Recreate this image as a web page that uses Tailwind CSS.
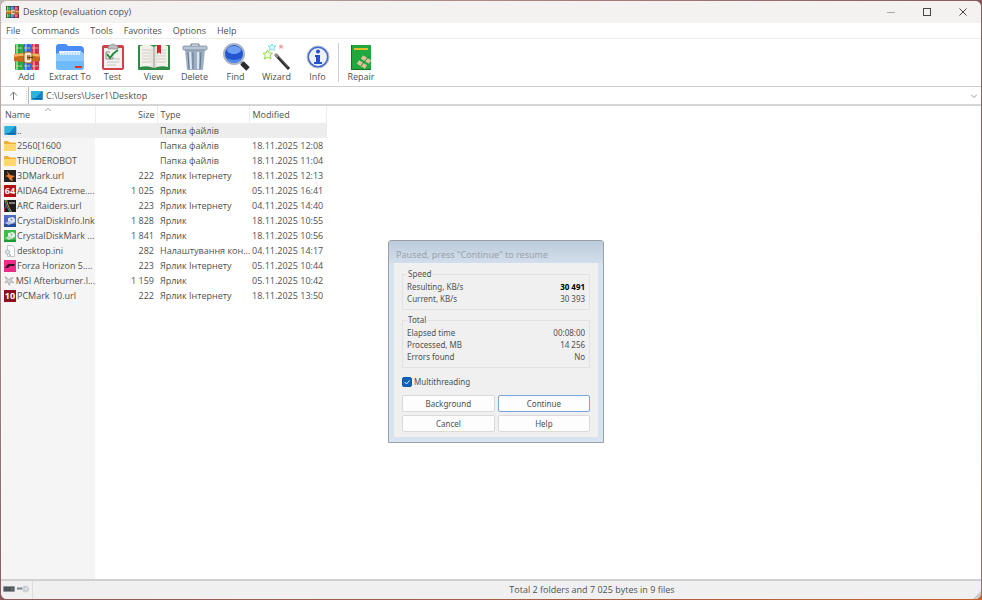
<!DOCTYPE html>
<html lang="en">
<head>
  <meta charset="UTF-8" />
  <meta name="viewport" content="width=device-width, initial-scale=1.0"/>
  <title>Desktop (evaluation copy)</title>
  <script src="https://cdn.jsdelivr.net/npm/@tailwindcss/browser@4"></script>
</head>
<body class="h-screen overflow-hidden bg-linear-to-br from-[#c4b6b3] via-[#8a5a5c] to-[#c4622c] p-px font-['Open_Sans','Noto_Sans',sans-serif] text-[9px] leading-3 text-[#505050]">

  <!-- Shared icons -->
  <svg class="hidden">
    <symbol id="books" viewBox="0 0 26 28">
      <rect x="1" y="1" width="8" height="26" rx="1" fill="#2fae3c"/><rect x="2" y="1" width="2" height="26" fill="#7be07b"/>
      <rect x="9" y="1" width="8" height="26" rx="1" fill="#2d6fe0"/><rect x="11" y="1" width="2" height="26" fill="#74b5ff"/>
      <rect x="17" y="1" width="8" height="26" rx="1" fill="#e0304c"/><rect x="19" y="1" width="2" height="26" fill="#ff7f96"/>
      <path d="M5 2v24M13 2v24M22 2v24" stroke="#000" stroke-opacity=".2"/>
      <path d="M2 5h6M10 5h6M18 5h6M2 23h6M10 23h6M18 23h6" stroke="#d9d9a0" stroke-width=".8"/>
      <path d="M0 11q13-2 26 0v7q-13 2-26 0z" fill="#c96a1c"/>
      <path d="M0 12.500q13-2 26 0" fill="none" stroke="#f6b55c" stroke-width="2.500"/>
      <rect x="10" y="9" width="8" height="11" rx="2" fill="#f0e6d2" stroke="#9a5618"/>
      <path d="M13 12h3v5h-3z" fill="#c98338"/><path d="M13 14.500h6" stroke="#70401a" stroke-width="1.500"/>
    </symbol>
    <symbol id="desktop" viewBox="0 0 13 10">
      <rect width="13" height="10" rx="1" fill="#1583c6"/><path d="M0 1q0-1 1-1h11L3 10H1q-1 0-1-1z" fill="#2bb4dc"/>
      <path d="M1 8.500h11" stroke="#0b5f9e"/>
    </symbol>
    <symbol id="folder" viewBox="0 0 12 10">
      <path d="M0 1q0-1 1-1h3l1.500 1.500H11q1 0 1 1V8H0z" fill="#eeb02c"/><path d="M0 3h12v6q0 1-1 1H1Q0 10 0 9z" fill="#ffd76c"/>
    </symbol>
  </svg>

  <div class="relative flex h-full flex-col overflow-hidden rounded-md bg-white">

    <!-- Title bar -->
    <header class="flex h-[22px] shrink-0 items-center bg-[#f4f1f1] pl-[5px]">
      <svg class="mr-1 h-3 w-[13px]" viewBox="0 0 26 28" preserveAspectRatio="none"><rect width="26" height="28" fill="#38233a"/><use href="#books"/></svg>
      <h1 class="flex-1">Desktop (evaluation copy)</h1>
      <button aria-label="Minimize" class="flex w-9 justify-center"><svg class="size-2" viewBox="0 0 8 8"><path d="M0 4.500h8" stroke="#aaa"/></svg></button>
      <button aria-label="Maximize" class="flex w-9 justify-center"><svg class="size-2" viewBox="0 0 8 8"><rect x=".5" y=".5" width="7" height="7" fill="none" stroke="#444"/></svg></button>
      <button aria-label="Close" class="flex w-9 justify-center"><svg class="size-2" viewBox="0 0 8 8"><path d="M.5.500l7 7M7.500.500l-7 7" stroke="#444"/></svg></button>
    </header>

    <!-- Menu -->
    <nav class="flex h-4 shrink-0 items-center gap-[11px] border-b border-[#ececec] pt-px pl-[5px]">
      <button>File</button>
      <button>Commands</button>
      <button>Tools</button>
      <button>Favorites</button>
      <button>Options</button>
      <button>Help</button>
    </nav>

    <!-- Toolbar -->
    <div class="flex h-12 shrink-0 border-b border-[#cfcfcf] pt-1 pl-1" role="toolbar">
      <button class="flex w-[43px] flex-col items-center">
        <svg class="h-7 w-[26px]"><use href="#books"/></svg>
        <span>Add</span>
      </button>
      <button class="flex w-11 flex-col items-center">
        <svg class="h-7 w-[30px]" viewBox="0 0 30 28">
          <path d="M1 4q0-3 3-3h6q2 0 3 2h12q4 0 4 4v12H1z" fill="#4a8cf5"/>
          <path d="M4 8h22v9H4z" fill="#eef4fb"/>
          <path d="M1 12q0-2 2-2h4q2 0 3-1h16q3 0 3 3v12q0 3-3 3H4q-3 0-3-3z" fill="#8ccbfe"/>
          <path d="M1 18h28v6q0 3-3 3H4q-3 0-3-3z" fill="#6fbafb"/>
          <path d="M5 10.500h20" stroke="#f4f7fb" stroke-width="3" stroke-dasharray="1 .6"/>
          <path d="M20 24h7" stroke="#e2322c" stroke-width="2"/>
        </svg>
        <span>Extract To</span>
      </button>
      <button class="flex w-[41px] flex-col items-center">
        <svg class="h-7 w-6" viewBox="0 0 24 28">
          <rect x="1" y="2" width="22" height="25" rx="2" fill="#cf4048"/><rect x="3" y="5" width="18" height="20" fill="#f1f1ef"/>
          <path d="M7 4q0-2 3-2 0-1 2-1t2 1q3 0 3 2v2H7z" fill="#b9bcc0" stroke="#777" stroke-width=".5"/>
          <path d="M13 16h6M6 19h12M6 22h9" stroke="#c6c6c6"/>
          <path d="M6 11l3 4q3-5 8-8" fill="none" stroke="#248a3c" stroke-width="2"/>
          <path d="M9 9H5v7h7v-2" fill="none" stroke="#777" stroke-width=".8"/>
        </svg>
        <span>Test</span>
      </button>
      <button class="flex w-[41px] flex-col items-center">
        <svg class="h-7 w-8" viewBox="0 0 32 28">
          <rect y="2" width="32" height="25" rx="1" fill="#2f8a45"/>
          <path d="M2 3q8-3 14 1 6-4 14-1v21q-8-2-14 1-6-3-14-1z" fill="#f3f1ea"/>
          <path d="M16 4v21" stroke="#8b8b80"/><path d="M14 4v20M18 4v20" stroke="#d8d5ca"/>
          <path d="M4 7h9M4 10h9M4 13h9M4 16h9M4 19h9M19 13h9M19 16h9M19 19h9M24 7h4M24 10h4" stroke="#cfcdc5"/>
          <path d="M19 2h4v9l-2-1.500-2 1.500z" fill="#d8232e"/>
        </svg>
        <span>View</span>
      </button>
      <button class="flex w-[41px] flex-col items-center">
        <svg class="h-7 w-[26px]" viewBox="0 0 26 28">
          <path d="M9 3V1h8v2" fill="none" stroke="#66768a"/>
          <path d="M3 7h20l-2 20H5z" fill="#9fb0c4"/>
          <path d="M8 9l1 17M16 9v17" stroke="#dce6f0" stroke-width="2"/><path d="M11 9v17M19 9l-1 17M6 9l1 17" stroke="#63758b"/>
          <rect x="1" y="3" width="24" height="4" rx="1" fill="#b7c5d5" stroke="#6b7c90" stroke-width=".7"/>
        </svg>
        <span>Delete</span>
      </button>
      <button class="flex w-[41px] flex-col items-center">
        <svg class="h-7 w-7" viewBox="0 0 28 28">
          <path d="M18 18l3 3" stroke="#8a8f98" stroke-width="3"/><path d="M20 20l6 6" stroke="#2b2b2f" stroke-width="5"/>
          <circle cx="12" cy="11" r="10" fill="#2456d0" stroke="#a9b4c6" stroke-width="2"/>
          <ellipse cx="12" cy="7" rx="7" ry="4" fill="#6f9ff5"/><path d="M5 15q7 4 14 0-2 5-7 5t-7-5z" fill="#4f8cf2"/>
        </svg>
        <span>Find</span>
      </button>
      <button class="flex w-[41px] flex-col items-center">
        <svg class="h-7 w-7" viewBox="0 0 28 28">
          <path d="M13 12l13 14" stroke="#29292c" stroke-width="3"/><path d="M12 11l3 3" stroke="#8d8d90" stroke-width="3"/><path d="M16 14l9 10" stroke="#85858a" stroke-width=".8"/>
          <path d="M4.500 7l1.500 3 3.500.2L7 12.500l1 3.500-3.300-1.700L1.500 16l.7-3.500L0 10.200l3.200-.2z" fill="#f6ffe8" stroke="#8bdc3c"/>
          <path d="M9 1l1 2h3l-2 2 .6 2.500L9 6 6.500 7.500 7 5 5 3h3z" fill="#e2fbff" stroke="#6cd5ec" stroke-width=".8"/>
          <path d="M18 1l.7 1.500h2L19.300 4l.5 2L18 5l-1.800 1 .5-2-1.400-1.500h2z" fill="#f0a0a0"/>
        </svg>
        <span>Wizard</span>
      </button>
      <button class="flex w-[41px] flex-col items-center">
        <svg class="h-7 w-6" viewBox="0 0 24 28">
          <circle cx="12" cy="14" r="11" fill="#edf1f8" stroke="#aeb7c6"/><circle cx="12" cy="14" r="9.700" fill="none" stroke="#3f67cf" stroke-width="1.500"/>
          <circle cx="12" cy="8.500" r="2" fill="#2852cc"/><path d="M9 12h5v7h2v2H8v-2h2v-5H9z" fill="#2852cc"/>
        </svg>
        <span>Info</span>
      </button>
      <div class="mb-1 w-px bg-[#cfcfcf]"></div>
      <button class="flex w-11 flex-col items-center">
        <svg class="h-7 w-5" viewBox="0 0 20 28">
          <rect y="2" width="20" height="25" fill="#20a83c"/><rect y="2" width="1" height="25" fill="#127326"/><path d="M1 26.500h19" stroke="#127326"/>
          <rect x="3" y="5" width="14" height="2" fill="#e5bd2b"/>
          <path d="M7 19l8 5M11 14l8 5" stroke="#e0c09a" stroke-width="4"/><path d="M10 23l8-10" stroke="#178a30"/>
        </svg>
        <span>Repair</span>
      </button>
    </div>

    <!-- Address bar -->
    <div class="flex h-[19px] shrink-0 items-center border-b-2 border-[#d6d6d6]">
      <button aria-label="Up one folder" class="flex w-[26px] justify-center border-r border-dotted border-[#ccc]">
        <svg class="size-[9px]" viewBox="0 0 9 9" fill="none" stroke="#777"><path d="M4.500 9V1M1 4.500L4.500 1 8 4.500"/></svg>
      </button>
      <div class="ml-px flex h-full flex-1 items-center gap-[3px] border-l border-[#bbb] pr-1 pl-[2px]">
        <svg class="h-[9px] w-3"><use href="#desktop"/></svg>
        <input type="text" aria-label="Path" value="C:\Users\User1\Desktop" class="min-w-0 flex-1 pt-px outline-none"/>
        <button aria-label="Show path history"><svg class="h-1 w-[6px]" viewBox="0 0 6 4"><path d="M0 .5l3 3 3-3" fill="none" stroke="#999"/></svg></button>
      </div>
    </div>

    <!-- File list -->
    <main class="relative min-h-0 flex-1 pl-px">
      <div class="h-full w-[93px] bg-[#f5f5f5]"></div>
      <table class="absolute top-0 left-px w-[325px] table-fixed text-left whitespace-nowrap">
        <thead>
          <tr class="h-[17px] bg-white">
            <th class="relative w-[93px] border-r border-[#ececec] pt-px pl-[3px] font-normal">Name
              <svg class="absolute top-[2px] left-[43px] h-[3px] w-[6px]" viewBox="0 0 6 3"><path d="M0 3l3-2.500L6 3" fill="none" stroke="#999" stroke-width=".8"/></svg>
            </th>
            <th class="w-[62px] border-r border-[#ececec] pt-px pr-[2px] text-right font-normal">Size</th>
            <th class="w-[92px] border-r border-[#ececec] pt-px pl-[3px] font-normal">Type</th>
            <th class="border-r border-[#ececec] pt-px pl-[3px] font-normal">Modified</th>
          </tr>
        </thead>
        <tbody>
          <tr class="h-[15px] bg-[#ededed]">
            <td><div class="flex items-center pl-[2px]"><svg class="h-[9px] w-[13px]"><use href="#desktop"/></svg>..</div></td>
            <td></td><td class="pl-[3px]">Папка файлів</td><td></td>
          </tr>
          <tr class="h-[15px]">
            <td><div class="flex items-center gap-px pl-[2px]"><svg class="h-[10px] w-3"><use href="#folder"/></svg>2560[1600</div></td>
            <td></td><td class="pl-[3px]">Папка файлів</td><td class="pl-[3px]">18.11.2025 12:08</td>
          </tr>
          <tr class="h-[15px]">
            <td><div class="flex items-center gap-px pl-[2px]"><svg class="h-[10px] w-3"><use href="#folder"/></svg>THUDEROBOT</div></td>
            <td></td><td class="pl-[3px]">Папка файлів</td><td class="pl-[3px]">18.11.2025 11:04</td>
          </tr>
          <tr class="h-[15px]">
            <td><div class="flex items-center gap-px pl-[2px]"><svg class="size-3" viewBox="0 0 12 12"><rect width="12" height="12" fill="#26221f"/><path d="M3 1l3 4 5 1-3 2 1 3-3-1-2-3-3-1 3-1z" fill="#e67e2e"/></svg>3DMark.url</div></td>
            <td class="pr-[3px] text-right">222</td><td class="pl-[3px]">Ярлик Інтернету</td><td class="pl-[3px]">18.11.2025 12:13</td>
          </tr>
          <tr class="h-[15px]">
            <td><div class="flex items-center gap-px pl-[2px]"><span class="w-3 bg-[#b90f14] text-center leading-3 font-bold text-white">64</span>AIDA64 Extreme....</div></td>
            <td class="pr-[3px] text-right">1 025</td><td class="pl-[3px]">Ярлик</td><td class="pl-[3px]">05.11.2025 16:41</td>
          </tr>
          <tr class="h-[15px]">
            <td><div class="flex items-center gap-px pl-[2px]"><svg class="size-3" viewBox="0 0 12 12"><rect width="12" height="12" fill="#1e1a20"/><path d="M1 0q1 7 5 12" fill="none" stroke="#35a9bd"/><path d="M0 12Q1 6 3 4" fill="none" stroke="#d33a34"/><path d="M2.500 0q1 6 5 12" fill="none" stroke="#e8c53b" stroke-width=".8"/><path d="M5 3h6" stroke="#e7ddd0"/></svg>ARC Raiders.url</div></td>
            <td class="pr-[3px] text-right">223</td><td class="pl-[3px]">Ярлик Інтернету</td><td class="pl-[3px]">04.11.2025 14:40</td>
          </tr>
          <tr class="h-[15px]">
            <td><div class="flex items-center gap-px pl-[2px]"><svg class="size-3" viewBox="0 0 12 12"><rect width="12" height="12" fill="#4a6cc0"/><path d="M0 9h12v3H0z" fill="#284a9c"/><path d="M4 3l5-1 2 2v3l-4 2-3-3z" fill="#dfe6f2"/><path d="M1 8l4-2 4 2-4 2z" fill="#b6c3dc"/><circle cx="7.500" cy="4.500" r="1" fill="#7d91bd"/></svg>CrystalDiskInfo.lnk</div></td>
            <td class="pr-[3px] text-right">1 828</td><td class="pl-[3px]">Ярлик</td><td class="pl-[3px]">18.11.2025 10:55</td>
          </tr>
          <tr class="h-[15px]">
            <td><div class="flex items-center gap-px pl-[2px]"><svg class="size-3" viewBox="0 0 12 12"><rect width="12" height="12" fill="#3dbb4c"/><path d="M0 10h12v2H0z" fill="#1d9a34"/><path d="M4 3l5-1 2 2v3l-4 2-3-3z" fill="#e5f3e6"/><path d="M1 8l4-2 4 2-4 2z" fill="#c0dcc4"/><circle cx="7.500" cy="4.500" r="1" fill="#8fb896"/></svg>CrystalDiskMark ...</div></td>
            <td class="pr-[3px] text-right">1 841</td><td class="pl-[3px]">Ярлик</td><td class="pl-[3px]">18.11.2025 10:56</td>
          </tr>
          <tr class="h-[15px]">
            <td><div class="flex items-center gap-px pl-[2px]"><svg class="size-3" viewBox="0 0 12 12"><path d="M3.500.500h5l2 2v9h-7z" fill="#fff" stroke="#c4c4c4"/><circle cx="3.500" cy="7" r="2" fill="#e3ebf0" stroke="#a7b5be"/><circle cx="6" cy="10" r="1" fill="#a7b5be"/></svg>desktop.ini</div></td>
            <td class="pr-[3px] text-right">282</td><td class="pl-[3px]">Налаштування кон...</td><td class="pl-[3px]">04.11.2025 14:17</td>
          </tr>
          <tr class="h-[15px]">
            <td><div class="flex items-center gap-px pl-[2px]"><svg class="size-3" viewBox="0 0 12 12"><rect width="12" height="12" fill="#ec2c86"/><path d="M1 8l3-4h7l-1 2H6L4 8z" fill="#35112a"/></svg>Forza Horizon 5....</div></td>
            <td class="pr-[3px] text-right">223</td><td class="pl-[3px]">Ярлик Інтернету</td><td class="pl-[3px]">05.11.2025 10:44</td>
          </tr>
          <tr class="h-[15px]">
            <td><div class="flex items-center gap-px pl-[2px]"><svg class="size-3" viewBox="0 0 12 12"><path d="M1 1l4 3 5-2-2 3 3 3-4-1-1 4-2-4-3 1 2-3z" fill="#d4d4d4" stroke="#999" stroke-width=".7"/></svg>MSI Afterburner.l...</div></td>
            <td class="pr-[3px] text-right">1 159</td><td class="pl-[3px]">Ярлик</td><td class="pl-[3px]">05.11.2025 10:42</td>
          </tr>
          <tr class="h-[15px]">
            <td><div class="flex items-center gap-px pl-[2px]"><span class="w-3 bg-[#8e1020] text-center leading-3 font-bold text-white">10</span>PCMark 10.url</div></td>
            <td class="pr-[3px] text-right">222</td><td class="pl-[3px]">Ярлик Інтернету</td><td class="pl-[3px]">18.11.2025 13:50</td>
          </tr>
        </tbody>
      </table>
    </main>

    <!-- Status bar -->
    <footer class="flex h-5 shrink-0 items-center border-t-2 border-[#d0d0d0] bg-[#f0f0f0]">
      <div class="flex h-full w-8 items-center gap-[2px] border-r border-[#dedede] pb-[2px] pl-[2px]">
        <svg class="h-[6px] w-3" viewBox="0 0 12 6"><rect width="12" height="6" rx="1" fill="#8f979d"/><rect x="1" y="1" width="10" height="4" fill="#4f575b"/><path d="M8 3h2" stroke="#6f9e72"/></svg>
        <svg class="h-2 w-3" viewBox="0 0 12 8"><path d="M0 3.500h6" stroke="#7b8185" stroke-width="2"/><circle cx="8.500" cy="4" r="3.500" fill="#cdd4d7"/><circle cx="9" cy="3.500" r="1.500" fill="#f4f6f7" stroke="#a5acb0" stroke-width=".5"/></svg>
      </div>
      <div class="w-[48.500%]"></div>
      <p class="flex-1 pl-px">Total 2 folders and 7 025 bytes in 9 files</p>
      <svg class="size-2 self-end" viewBox="0 0 8 8"><path d="M0 8l8-8v8z" fill="#c9c9c9"/></svg>
    </footer>

    <!-- Progress dialog -->
    <div role="dialog" aria-labelledby="dialogTitle" class="absolute top-[40%] left-[39.500%] w-[216px] rounded-t-[3px] border border-[#9aa0a6] bg-[#d7e3f0] px-[5px] pb-[5px] font-['Noto_Sans','Open_Sans',sans-serif] text-[8px]">
      <div class="-mx-[5px] rounded-t-[2px] bg-linear-to-b from-[#bccbdb] to-[#d2deeb] px-[7px] pt-2 pb-[2px]">
        <h2 id="dialogTitle" class="text-[9px] text-[#9aa3ac]">Paused, press "Continue" to resume</h2>
      </div>
      <div class="bg-[#f0f0f0] px-2 pt-[5px] pb-[5px]">
        <fieldset class="border border-[#e2e2e2] px-1 pb-1">
          <legend class="px-px">Speed</legend>
          <dl class="grid grid-cols-[1fr_auto] pt-px">
            <dt>Resulting, KB/s</dt><dd class="text-right font-bold text-black">30 491</dd>
            <dt>Current, KB/s</dt><dd class="text-right">30 393</dd>
          </dl>
        </fieldset>
        <fieldset class="mt-1 border border-[#e2e2e2] px-1 pb-1">
          <legend class="px-px">Total</legend>
          <dl class="grid grid-cols-[1fr_auto] pt-px">
            <dt>Elapsed time</dt><dd class="text-right">00:08:00</dd>
            <dt>Processed, MB</dt><dd class="text-right">14 256</dd>
            <dt>Errors found</dt><dd class="text-right">No</dd>
          </dl>
        </fieldset>
        <label class="relative mt-2 flex items-center gap-[2px]">
          <input type="checkbox" checked class="size-[10px] appearance-none rounded-[2px] border border-[#8a8a8a] checked:border-[#0b5cad] checked:bg-[#0f63b8]"/>
          <svg class="pointer-events-none absolute left-[2px] size-[6px]" viewBox="0 0 6 6"><path d="M.5 3l2 2 3-3.500" fill="none" stroke="#fff" stroke-width=".9"/></svg>
          Multithreading
        </label>
        <div class="mt-[7px] grid grid-cols-2 gap-[3px]">
          <button class="h-[17px] rounded-[2px] border border-[#dadada] bg-[#fdfdfd]">Background</button>
          <button class="h-[17px] rounded-[2px] border border-[#7fa3dc] bg-[#fdfdfd]">Continue</button>
          <button class="h-[17px] rounded-[2px] border border-[#dadada] bg-[#fdfdfd]">Cancel</button>
          <button class="h-[17px] rounded-[2px] border border-[#dadada] bg-[#fdfdfd]">Help</button>
        </div>
      </div>
    </div>
  </div>

</body>
</html>
